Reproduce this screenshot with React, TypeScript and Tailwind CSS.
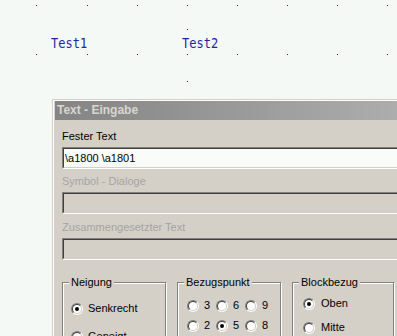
import React from 'react';

const dotXs = [36, 87, 137, 187, 237, 287, 337, 387];
const dots: [number, number][] = [
  ...dotXs.map((x) => [x, 5] as [number, number]),
  ...dotXs.map((x) => [x, 54] as [number, number]),
  [187, 29],
  [187, 81],
];

function Radio({ checked }: { checked?: boolean }) {
  return (
    <span className="inline-flex h-3 w-3 shrink-0 rounded-full border border-t-[#808080] border-l-[#808080] border-b-white border-r-white">
      <span className="flex flex-1 items-center justify-center rounded-full border border-t-[#404040] border-l-[#404040] border-b-[#d4d0c8] border-r-[#d4d0c8] bg-white">
        {checked && <span className="h-1 w-1 rounded-full bg-black" />}
      </span>
    </span>
  );
}

function Field({ children, disabled }: { children?: React.ReactNode; disabled?: boolean }) {
  return (
    <div className="h-[22px] border border-t-[#808080] border-l-[#808080] border-b-white border-r-white">
      <div
        className={`flex h-full items-center border border-t-[#404040] border-l-[#404040] border-b-[#d4d0c8] border-r-[#d4d0c8] pl-px ${
          disabled ? 'bg-[#d4d0c8]' : 'bg-[#f9fcf9]'
        }`}
      >
        {children}
      </div>
    </div>
  );
}

function Group({
  title,
  width,
  className,
  children,
}: {
  title: string;
  width: string;
  className: string;
  children: React.ReactNode;
}) {
  return (
    <div
      className={`relative ${width} h-[90px] shrink-0 border border-[#808080] shadow-[inset_1px_1px_0_#fff,1px_1px_0_#fff] ${className}`}
    >
      <span className="absolute left-[6px] top-[-7px] bg-[#d4d0c8] px-[2px] leading-[13px]">{title}</span>
      {children}
    </div>
  );
}

export default function App() {
  return (
    <div className="relative h-[336px] w-[397px] overflow-hidden bg-[#f5f9f5]">
      {dots.map(([x, y], i) => (
        <span
          key={i}
          className="absolute h-px w-px bg-[#303030]"
          style={{ left: x, top: y }}
        />
      ))}

      <span className="absolute left-[51px] top-[35px] origin-top scale-y-[1.2] font-['DejaVu_Sans_Mono',monospace] text-[12px] leading-[14px] text-[#2424a8]">
        Test1
      </span>
      <span className="absolute left-[182px] top-[35px] origin-top scale-y-[1.2] font-['DejaVu_Sans_Mono',monospace] text-[12px] leading-[14px] text-[#2424a8]">
        Test2
      </span>

      {/* dialog window */}
      <div className="absolute left-[52px] top-[99px] w-[420px] border-l border-t border-[#d4d0c8] bg-[#d4d0c8] font-['Liberation_Sans',Arial,sans-serif] text-[11px] leading-[13px] text-black">
        <div className="border-l border-t border-white pl-px">
          <div className="flex h-[19px] items-center bg-gradient-to-r from-[#848484] to-[#b6b6b6] pl-[2px] text-[12px] font-bold text-[#d8d6d0]">
            Text - Eingabe
          </div>

          <div className="pl-[7px] pr-4 pt-[10px]">
            <div>Fester Text</div>
            <div className="mt-[4px]">
              <Field>{'\\a1800 \\a1801'}</Field>
            </div>

            <div className="mt-[6px] text-[#a4a4a4]">Symbol - Dialoge</div>
            <div className="mt-[4px]">
              <Field disabled />
            </div>

            <div className="mt-[7px] text-[#a4a4a4]">Zusammengesetzter Text</div>
            <div className="mt-[4px]">
              <Field disabled />
            </div>

            <div className="mt-[22px] flex gap-[11px]">
              <Group title="Neigung" width="w-[104px]" className="pl-[8px] pt-[19px]">
                <div className="flex flex-col gap-[15px]">
                  <label className="flex items-center gap-[5px]">
                    <Radio checked />
                    <span>Senkrecht</span>
                  </label>
                  <label className="flex items-center gap-[5px]">
                    <Radio />
                    <span>Geneigt</span>
                  </label>
                </div>
              </Group>

              <Group title="Bezugspunkt" width="w-[104px]" className="pl-[9px] pt-[16px]">
                <div className="flex flex-col gap-[7px]">
                  {[
                    ['3', '6', '9'],
                    ['2', '5', '8'],
                    ['1', '4', '7'],
                  ].map((row, r) => (
                    <div key={r} className="flex gap-[6px]">
                      {row.map((n) => (
                        <label key={n} className="flex items-center gap-[5px]">
                          <Radio checked={n === '5'} />
                          <span className="w-[6px]">{n}</span>
                        </label>
                      ))}
                    </div>
                  ))}
                </div>
              </Group>

              <Group title="Blockbezug" width="w-[102px]" className="pl-[10px] pt-[14px]">
                <div className="flex flex-col gap-[11px]">
                  {['Oben', 'Mitte', 'Unten'].map((t, i) => (
                    <label key={t} className="flex items-center gap-[6px]">
                      <Radio checked={i === 0} />
                      <span>{t}</span>
                    </label>
                  ))}
                </div>
              </Group>
            </div>
          </div>
        </div>
      </div>
    </div>
  );
}
